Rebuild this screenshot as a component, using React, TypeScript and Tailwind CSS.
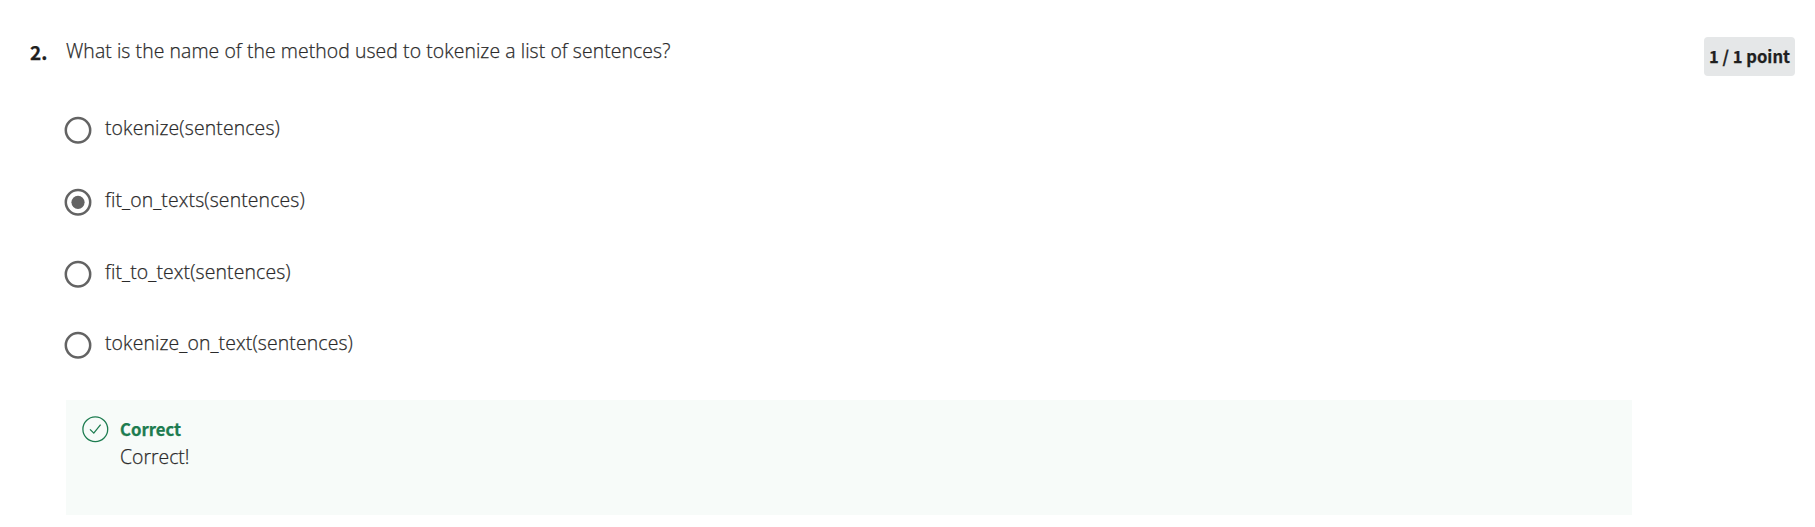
const options = ["tokenize(sentences)", "fit_on_texts(sentences)", "fit_to_text(sentences)", "tokenize_on_text(sentences)"];

function Radio({ checked }: { checked: boolean }) {
  return (
    <svg className="block size-7 shrink-0" viewBox="0 0 28 28" fill="none">
      <circle cx="14" cy="14.3" r="12.2" stroke="#636363" strokeWidth="2.5" />
      {checked && <circle cx="14" cy="14.3" r="6.6" fill="#636363" />}
    </svg>
  );
}

export default function App() {
  return (
    <main className="flex h-[527px] w-[1815px] bg-white pt-[37px] font-['Open_Sans',sans-serif] text-[19.4px] leading-7 font-light text-[#2a2a2a] [-webkit-text-stroke:0.25px]">
      <div className="w-[66px] shrink-0 pt-[1px] pl-[30px] font-['Noto_Sans_CJK_SC',sans-serif] text-[19px] font-bold text-[#1f1f1f]">2.</div>
      <section className="w-[1566px] shrink-0">
        <h1 className="tracking-[0.075px]">What is the name of the method used to tokenize a list of sentences?</h1>
        <div className="mt-[51.45px] flex flex-col gap-[43.6px]">
          {options.map((o, i) => (
            <label key={o} className="-ml-[2px] flex h-7 gap-[13px] tracking-[0.13px]">
              <Radio checked={i === 1} />
              <span className="-mt-[2px]">{o}</span>
            </label>
          ))}
        </div>
        <div className="mt-[40.75px] flex h-[115px] gap-[11px] bg-[#f7fbf9] pt-[15px] pl-[15px]">
          <svg className="block size-7 shrink-0" viewBox="0 0 28 28" fill="none" stroke="#1d7c50" strokeWidth="1.3">
            <circle cx="14.3" cy="14.3" r="12.4" />
            <path d="m9 14.4 3.8 3.7 6.8-8.4" />
          </svg>
          <div>
            <div className="font-['Noto_Sans_CJK_SC',sans-serif] text-[16.7px] font-bold text-[#1d7c50]">Correct</div>
            <div>Correct!</div>
          </div>
        </div>
      </section>
      <div className="ml-[72px] flex h-[39px] w-[91px] shrink-0 items-center justify-center rounded bg-[#e5e7e8] pb-[2px] font-['Noto_Sans_CJK_SC',sans-serif] text-[16.6px] font-bold whitespace-nowrap text-[#1f1f1f]">1 / 1 point</div>
    </main>
  );
}
